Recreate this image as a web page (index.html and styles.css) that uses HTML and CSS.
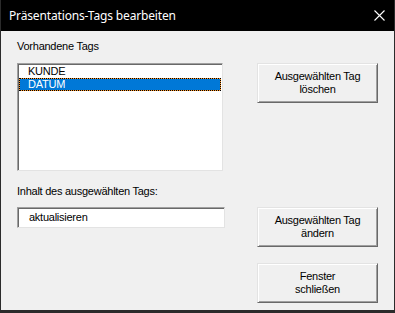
FILE: index.html
```html
<!DOCTYPE html>
<html lang="de">

<head>
    <meta charset="UTF-8">
    <meta name="viewport" content="width=device-width, initial-scale=1.0">
    <title>Präsentations-Tags bearbeiten</title>
    <link rel="stylesheet" href="styles.css">
</head>

<body>
    <div class="window">
        <div class="title-bar">
            <span class="title">Präsentations-Tags bearbeiten</span>
            <svg class="close-icon" width="11" height="11" viewBox="0 0 11 11">
                <path d="M0.5 0.5 L10.5 10.5 M10.5 0.5 L0.5 10.5" stroke="#fff" stroke-width="1.1" fill="none" />
            </svg>
        </div>

        <div class="content">
            <div class="left-col">
                <div class="label">Vorhandene Tags</div>
                <div class="listbox">
                    <div class="list-item">KUNDE</div>
                    <div class="list-item selected">DATUM</div>
                </div>
                <div class="label label-second">Inhalt des ausgewählten Tags:</div>
                <div class="textfield">aktualisieren</div>
            </div>

            <div class="right-col">
                <button class="btn">Ausgewählten Tag<br>löschen</button>
                <button class="btn btn-change">Ausgewählten Tag<br>ändern</button>
                <button class="btn btn-close">Fenster<br>schließen</button>
            </div>
        </div>
    </div>
</body>

</html>
```

FILE: styles.css
```css
body {
    margin: 0;
    font-family: "Liberation Sans", Arial, sans-serif;
    font-size: 11px;
    background-color: #f0f0f0;
}

.window {
    width: 395px;
    height: 313px;
    box-sizing: border-box;
    border: 1px solid #2b2b2b;
    border-top: none;
    border-bottom-width: 3px;
    background-color: #f0f0f0;
    display: flex;
    flex-direction: column;
}

.title-bar {
    height: 31px;
    background-color: #000;
    color: #fff;
    display: flex;
    align-items: center;
    justify-content: space-between;
    padding: 0 9px 0 8px;
}

.title {
    font-family: "Segoe UI", "Noto Sans", sans-serif;
    font-size: 12px;
    letter-spacing: -0.15px;
}

.close-icon {
    display: block;
    margin-bottom: 1px;
}

.content {
    display: flex;
    padding-left: 16px;
}

.left-col {
    width: 208px;
    padding-top: 9px;
}

.label {
    line-height: 13px;
    color: #000;
    letter-spacing: -0.25px;
}

.label-second {
    margin-top: 14px;
}

.listbox {
    margin-top: 10px;
    width: 206px;
    height: 108px;
    box-sizing: border-box;
    background-color: #fff;
    border: 1px solid;
    border-color: #a0a0a0 #e3e3e3 #e3e3e3 #a0a0a0;
    box-shadow: inset 1px 1px #696969, inset -1px -1px #fff;
    padding: 1px 1px 0 1px;
}

.list-item {
    height: 13px;
    line-height: 13px;
    padding-left: 9px;
    letter-spacing: -0.25px;
}

.list-item.selected {
    background-color: #0078d7;
    color: #fff;
    box-shadow: inset 0 0 0 1px #ff9a2e;
    outline: 1px dotted #000;
    outline-offset: -1px;
}

.textfield {
    margin-top: 9px;
    width: 208px;
    height: 21px;
    box-sizing: border-box;
    background-color: #fff;
    border: 1px solid;
    border-color: #a0a0a0 #e3e3e3 #e3e3e3 #a0a0a0;
    box-shadow: inset 1px 1px #696969;
    padding-left: 11px;
    line-height: 19px;
    letter-spacing: -0.25px;
}

.right-col {
    display: flex;
    flex-direction: column;
    margin-left: 32px;
    padding-top: 32px;
}

.btn {
    width: 121px;
    height: 40px;
    box-sizing: border-box;
    background-color: #f0f0f0;
    border: 1px solid;
    border-color: #e3e3e3 #696969 #696969 #e3e3e3;
    box-shadow: inset 1px 1px #fff, inset -1px -1px #a0a0a0;
    font-family: "Liberation Sans", Arial, sans-serif;
    font-size: 11px;
    line-height: 13px;
    letter-spacing: -0.25px;
    color: #000;
    padding: 0;
    text-align: center;
}

.btn-change {
    margin-top: 104px;
}

.btn-close {
    margin-top: 16px;
}
```
